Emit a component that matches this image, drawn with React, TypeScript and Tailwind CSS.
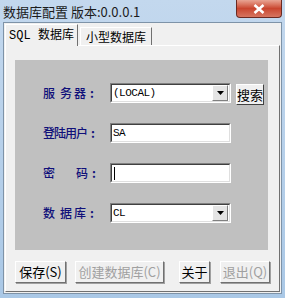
import React from "react";

const cjk = { fontFamily: '"Noto Sans CJK SC", "Noto Sans", sans-serif' };
const mono = { fontFamily: '"Liberation Mono", "Noto Sans CJK SC", monospace' };

function Sunken({ children, dropdown }: { children?: React.ReactNode; dropdown?: boolean }) {
  return (
    <div className="flex h-[20px] w-[121px] border-t border-l border-t-[#808080] border-l-[#808080] border-b border-r border-b-white border-r-white">
      <div className="flex flex-1 items-center border-t border-l border-t-[#404040] border-l-[#404040] border-b border-r border-b-[#dfdfdf] border-r-[#dfdfdf] bg-white">
        <div className="flex-1 pl-[1px] text-[11px] leading-none tracking-[-0.5px] text-black" style={mono}>{children}</div>
        {dropdown && (
          <div className="mr-[1px] flex h-[16px] w-[16px] items-center justify-center border-t border-l border-white border-b border-r border-b-[#808080] border-r-[#808080] bg-[#e4e4e4]">
            <svg width="7" height="4" viewBox="0 0 7 4"><path d="M0 0h7L3.5 4z" fill="#000" /></svg>
          </div>
        )}
      </div>
    </div>
  );
}

function Btn({ children, disabled, w }: { children: React.ReactNode; disabled?: boolean; w: string }) {
  return (
    <div className={`flex h-[22px] ${w} items-center justify-center border-t border-l border-white border-b border-r border-b-[#707070] border-r-[#707070] bg-[#f0f0f0] shadow-[1px_1px_0_#a0a0a0] text-[13px] ${disabled ? "text-[#a0a0a0]" : "text-black"}`} style={cjk}>
      {children}
    </div>
  );
}

function Label({ parts }: { parts: [string, string][] }) {
  return (
    <div className="flex h-[20px] w-[67px] items-center text-[12px] font-medium leading-none text-[#10107a]" style={cjk}>
      {parts.map(([ch, cls], i) => (
        <span key={i} className={cls}>{ch}</span>
      ))}
      <span className="ml-[4px] font-bold">:</span>
    </div>
  );
}

export default function App() {
  return (
    <div className="relative h-[298px] w-[285px] overflow-hidden bg-gradient-to-b from-[#c3d8ee] to-[#aac8e6]">
      <div className="flex h-[22px] items-center pl-[3px] pt-[1px] text-[13px] text-[#1b1b1b]" style={cjk}>
        数据库配置 版本:0.0.0.1
      </div>
      <div className="absolute right-[3px] top-0 flex h-[18px] w-[46px] items-center justify-center rounded-b-[4px] border border-t-0 border-[#6b2a22] bg-gradient-to-b from-[#e8a493] via-[#c9452f] to-[#d67560]">
        <svg width="12" height="10" viewBox="0 0 12 10"><path d="M1.5 1l9 8M10.5 1l-9 8" stroke="#fff" strokeWidth="2.6" /></svg>
      </div>
      <div className="mx-[3px] flex h-[272px] flex-col border border-[#7e93a8] bg-[#f0f0f0]">
        <div className="flex h-[22px] items-end pl-[1px]">
          <div className="z-10 -mb-[1px] flex h-[22px] w-[73px] items-center justify-center border-t border-l border-white border-r border-r-[#707070] bg-[#f0f0f0] text-[12px]" style={mono}>
            SQL 数据库
          </div>
          <div className="ml-[2px] flex h-[18px] w-[72px] items-center justify-center border-t border-l border-white border-r border-r-[#707070] text-[12px]" style={cjk}>
            小型数据库
          </div>
        </div>
        <div className="mx-[1px] mb-[1px] flex flex-1 flex-col border-t border-l border-white border-b border-r border-b-[#707070] border-r-[#707070] px-[9px] pt-[14px]">
          <div className="flex h-[190px] w-[253px] flex-col gap-[20px] bg-[#c0c0c0] pl-[28px] pt-[23px]">
            <div className="flex h-[20px] items-start">
              <Label parts={[["服", ""], ["务", "ml-[5px]"], ["器", "ml-[2px]"]]} />
              <Sunken dropdown>(LOCAL)</Sunken>
              <div className="ml-[5px] mt-[1px] flex h-[21px] w-[28px] items-center justify-center border-t border-l border-white border-b border-r border-b-[#404040] border-r-[#404040] bg-[#f0f0f0] text-[13px] text-black" style={cjk}>搜索</div>
            </div>
            <div className="flex h-[20px] items-start">
              <Label parts={[["登陆用户", "tracking-[-1px]"]]} />
              <Sunken>SA</Sunken>
            </div>
            <div className="flex h-[20px] items-start">
              <Label parts={[["密", ""], ["码", "ml-[21px]"]]} />
              <Sunken><span className="ml-[1px] inline-block h-[13px] w-[1px] bg-black align-middle" /></Sunken>
            </div>
            <div className="flex h-[20px] items-start">
              <Label parts={[["数", ""], ["据", "ml-[5px]"], ["库", "ml-[2px]"]]} />
              <Sunken dropdown>CL</Sunken>
            </div>
          </div>
          <div className="mt-[11px] flex items-center">
            <Btn w="w-[54px]">保存(S)</Btn>
            <div className="ml-[9px]"><Btn w="w-[89px]" disabled>创建数据库(C)</Btn></div>
            <div className="ml-[15px]"><Btn w="w-[31px]">关于</Btn></div>
            <div className="ml-[10px]"><Btn w="w-[50px]" disabled>退出(Q)</Btn></div>
          </div>
        </div>
      </div>
    </div>
  );
}
